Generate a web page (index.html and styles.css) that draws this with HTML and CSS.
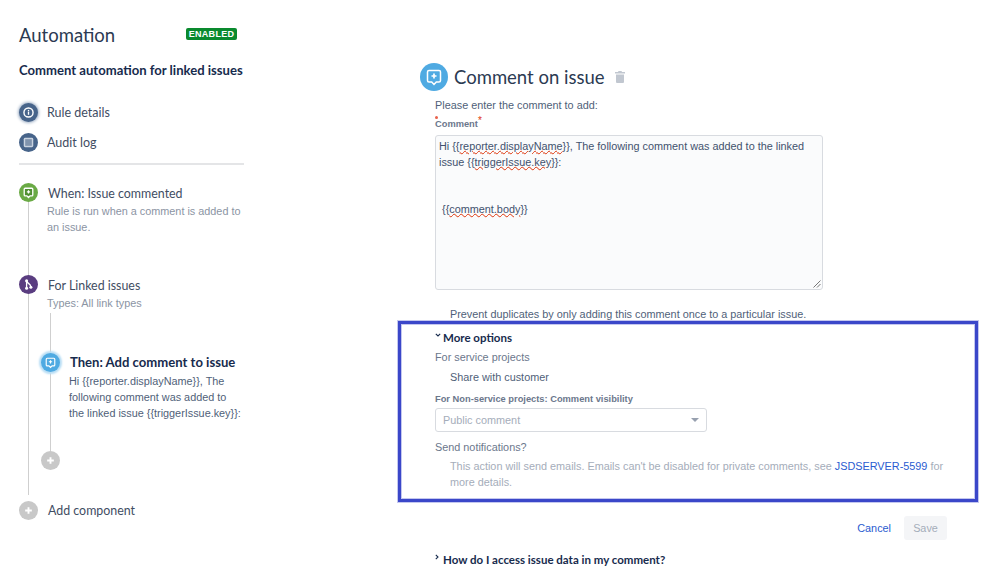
FILE: index.html
```html
<!DOCTYPE html>
<html lang="en">
<head>
<meta charset="utf-8">
<title>Automation</title>
<link rel="stylesheet" href="styles.css">
</head>
<body>
<div class="page">
  <aside class="sidebar">
    <div class="brand">
      <h1 class="brand-title">Automation</h1>
      <span class="badge">ENABLED</span>
    </div>
    <h2 class="rule-name">Comment automation for linked issues</h2>
    <nav class="nav">
      <div class="nav-row">
        <span class="dot dot-navy dot-glow"><svg viewBox="0 0 20 20" class="ico"><circle cx="10" cy="10" r="4.800" fill="none" stroke="#fff" stroke-width="1.500"/><rect x="9.300" y="9" width="1.400" height="3.400" fill="#fff"/><rect x="9.300" y="7.300" width="1.400" height="1.200" fill="#fff"/></svg></span>
        <span class="nav-label">Rule details</span>
      </div>
      <div class="nav-row">
        <span class="dot dot-navy"><svg viewBox="0 0 20 20" class="ico"><rect x="5" y="5" width="10" height="10" rx="1.500" fill="#c9d3e0"/><rect x="6.500" y="6.500" width="7" height="7" fill="#7f93ad"/></svg></span>
        <span class="nav-label">Audit log</span>
      </div>
    </nav>
    <div class="timeline">
      <span class="line-outer"></span>
      <div class="step step-when">
        <span class="dot dot-green"><svg viewBox="0 0 20 20" class="ico"><path d="M6.500 5.500h7a1 1 0 0 1 1 1v6a1 1 0 0 1-1 1h-1.800L10 15.200 8.300 13.500H6.500a1 1 0 0 1-1-1v-6a1 1 0 0 1 1-1z" fill="#4f8f30" stroke="#fff" stroke-width="1.400"/><path d="M10 7.500v3.500M8.250 9.250h3.500" stroke="#fff" stroke-width="1.300"/></svg></span>
        <div class="step-body">
          <div class="step-title">When: Issue commented</div>
          <p class="step-desc">Rule is run when a comment is added to an issue.</p>
        </div>
      </div>
      <div class="step step-for">
        <span class="dot dot-purple"><svg viewBox="0 0 20 20" class="ico"><path d="M8 6v8M8 6.500c.5 2.500 4.500 2.500 4.500 6" fill="none" stroke="#fff" stroke-width="1.400"/><circle cx="8" cy="6" r="1.600" fill="#fff"/><circle cx="8" cy="14" r="1.600" fill="#fff"/><circle cx="12.500" cy="12.800" r="1.600" fill="#fff"/></svg></span>
        <div class="step-body">
          <div class="step-title">For Linked issues</div>
          <p class="step-desc">Types: All link types</p>
        </div>
      </div>
      <div class="nested">
        <span class="line-inner"></span>
        <div class="step step-then">
          <span class="dot dot-blue dot-halo"><svg viewBox="0 0 20 20" class="ico"><path d="M6.500 5.500h7a1 1 0 0 1 1 1v6a1 1 0 0 1-1 1h-1.800L10 15.200 8.300 13.500H6.500a1 1 0 0 1-1-1v-6a1 1 0 0 1 1-1z" fill="none" stroke="#fff" stroke-width="1.200"/><path d="M10 7.500v3.500M8.250 9.250h3.500" stroke="#fff" stroke-width="1.200"/></svg></span>
          <div class="step-body">
            <div class="step-title step-title-strong">Then: Add comment to issue</div>
            <p class="step-text">Hi {{reporter.displayName}}, The following comment was added to the linked issue {{triggerIssue.key}}:</p>
          </div>
        </div>
        <div class="add-inner">
          <span class="dot dot-gray"><svg viewBox="0 0 20 20" class="ico"><path d="M10 6.500v7M6.500 10h7" stroke="#fff" stroke-width="2"/></svg></span>
        </div>
      </div>
      <div class="step step-add">
        <span class="dot dot-gray"><svg viewBox="0 0 20 20" class="ico"><path d="M10 6.500v7M6.500 10h7" stroke="#fff" stroke-width="2"/></svg></span>
        <div class="step-title">Add component</div>
      </div>
    </div>
  </aside>

  <main class="main">
    <header class="head">
      <span class="head-icon"><svg viewBox="0 0 28 28" class="ico"><path d="M9 7.500h10a1.500 1.500 0 0 1 1.500 1.500v8.500a1.500 1.500 0 0 1-1.500 1.500h-2.700L14 21.500 11.700 19H9a1.500 1.500 0 0 1-1.500-1.500V9A1.500 1.500 0 0 1 9 7.500z" fill="none" stroke="#fff" stroke-width="1.500"/><path d="M14 10.500v5M11.500 13h5" stroke="#fff" stroke-width="1.700"/></svg></span>
      <h1 class="head-title">Comment on issue</h1>
      <svg class="trash" viewBox="0 0 10 12"><path d="M3.500 0h3l.5 1H10v1.500H0V1h3zM1 3.500h8V11a1 1 0 0 1-1 1H2a1 1 0 0 1-1-1z" fill="#c1c7d0"/></svg>
    </header>
    <div class="form">
      <p class="intro">Please enter the comment to add:</p>
      <div class="label label-comment"><span class="tiny-star"></span>Comment<sup class="star">*</sup></div>
      <div class="textarea">
        <div class="ta-line">Hi {{<span class="sq">reporter.displayName</span>}}, The following comment was added to the linked</div>
        <div class="ta-line">issue {{<span class="sq">triggerIssue.key</span>}}:</div>
        <div class="ta-line">&nbsp;</div>
        <div class="ta-line ta-gap">&nbsp;{{<span class="sq">comment.body</span>}}</div>
        <svg class="grip" viewBox="0 0 9 9"><path d="M8.500 1.500l-7 7M8.500 5l-3.500 3.500" stroke="#777" stroke-width="1" fill="none"/></svg>
      </div>
      <p class="check-row check-prevent">Prevent duplicates by only adding this comment once to a particular issue.</p>

      <div class="toggle toggle-open">
        <svg class="chev" viewBox="0 0 6 4"><path d="M.8.800 3 3l2.200-2.200" fill="none" stroke="#172b4d" stroke-width="1.100"/></svg>
        <span class="toggle-label">More options</span>
      </div>
      <p class="section-label">For service projects</p>
      <p class="check-row check-share">Share with customer</p>
      <div class="label label-visibility">For Non-service projects: Comment visibility</div>
      <div class="select">
        <span>Public comment</span>
        <span class="caret"></span>
      </div>
      <p class="notify-label">Send notifications?</p>
      <p class="notify-text">This action will send emails. Emails can't be disabled for private comments, see <a class="link" href="#">JSDSERVER-5599</a> for more details.</p>
      <div class="actions">
        <a class="link cancel" href="#">Cancel</a>
        <span class="save">Save</span>
      </div>
      <div class="toggle toggle-closed">
        <svg class="chev chev-right" viewBox="0 0 4 6"><path d="M.8.800 3 3 .8 5.200" fill="none" stroke="#172b4d" stroke-width="1.100"/></svg>
        <span class="toggle-label">How do I access issue data in my comment?</span>
      </div>
    </div>
  </main>
  <div class="annotation"></div>
</div>
</body>
</html>
```
FILE: styles.css
```css
* { box-sizing: border-box; }
html, body { margin: 0; padding: 0; background: #fff; }
body { font-family: "Liberation Sans", Arial, sans-serif; color: #42526e; overflow: hidden; }
p, h1, h2 { margin: 0; font-weight: normal; }

.page { position: relative; display: flex; width: 999px; height: 577px; overflow: hidden; }

/* Sidebar */
.sidebar { width: 420px; flex: none; padding: 24px 0 0 19px; }
.brand { display: flex; align-items: center; width: 218px; height: 22px; justify-content: space-between; }
.brand-title { font: 18.500px/22px Lato, sans-serif; color: #2b3a52; }
.badge { background: #0a8a2e; color: #fff; font: bold 9px/12px "Liberation Sans", sans-serif; letter-spacing: .3px; padding: 0; border-radius: 2px; margin-top: -3px; height: 12px; width: 51px; text-align: center; white-space: nowrap; }
.rule-name { margin-top: 16px; font: bold 13.100px/17px Lato, sans-serif; color: #172b4d; white-space: nowrap; height: 18px; }

.nav { margin-top: 22px; width: 225px; padding-bottom: 11px; border-bottom: 2px solid #e4e5e7; height: 63px; }
.nav-row { display: flex; align-items: center; gap: 9px; height: 20px; margin-bottom: 10px; }
.nav-label { font: 12.500px/20px Lato, sans-serif; color: #3f4d63; padding-top: 1px; height: 20px; }

.dot { width: 19px; height: 19px; border-radius: 50%; flex: none; display: block; position: relative; z-index: 1; }
.ico { display: block; width: 100%; height: 100%; }
.dot-navy { background: #47648a; }
.dot-glow { box-shadow: 0 0 3px 1px #9fb0c6; }
.dot-green { background: #6aaa45; }
.dot-purple { background: #5a3d80; }
.dot-blue { background: #4faae2; }
.dot-halo { box-shadow: 0 0 2px 2px #b9def5; }
.dot-gray { background: #c8c8c8; }

.timeline { position: relative; padding-top: 18px; width: 225px; }
.line-outer { position: absolute; left: 9px; top: 30px; width: 1px; height: 300px; background: #cfcfcf; }
.step { display: flex; }
.step-when { height: 92px; gap: 10px; }
.step-for { height: 78px; gap: 10px; }
.step-title { font: 12.400px/22px Lato, sans-serif; height: 20px; color: #3f4d63; white-space: nowrap; }
.step-desc { margin: 1px 0 0 -1px; font: 10.850px/15.500px "Liberation Sans", sans-serif; color: #8b94a3; width: 198px; }

.nested { position: relative; padding-left: 22px; height: 147px; }
.line-inner { position: absolute; left: 31px; top: -40px; width: 1px; height: 140px; background: #cfcfcf; }
.step-then { gap: 10px; height: 98px; }
.step-title-strong { font-weight: bold; font-size: 13.100px; line-height: 19px; color: #172b4d; }
.step-text { margin: 0 0 0 -1px; font: 10.850px/16px "Liberation Sans", sans-serif; color: #505f79; width: 172px; }
.add-inner { height: 20px; }
.step-add { align-items: center; gap: 10px; height: 20px; }

/* Main */
.main { flex: none; width: 560px; padding-top: 63px; }
.head { display: flex; align-items: center; height: 28px; }
.head-icon { width: 28px; height: 28px; border-radius: 50%; background: #4faae2; flex: none; }
.head-title { margin-left: 6px; font: 18.500px/28px Lato, sans-serif; color: #2b3a52; white-space: nowrap; }
.trash { width: 10px; height: 12px; margin-left: 10px; }

.form { padding-left: 15px; width: 528px; font-size: 10.850px; }
.intro { margin-top: 8px; line-height: 13px; color: #505f79; }
.label { font-weight: bold; font-size: 9.300px; line-height: 12px; color: #6b778c; white-space: nowrap; }
.label-comment { margin-top: 6px; position: relative; }
.tiny-star { position: absolute; left: 0; top: -2px; width: 3px; height: 3px; border-radius: 50%; background: #e8604a; }
.star { color: #de350b; font-size: 10px; line-height: 0; vertical-align: 3px; font-weight: normal; }

.textarea { position: relative; margin-top: 5px; width: 388px; height: 155px; background: #fafbfc; border: 1px solid #d8dbe0; border-radius: 3px; padding: 2px 3px; line-height: 16px; color: #42526e; }
.ta-line { height: 16px; white-space: nowrap; }
.ta-gap { margin-top: 15px; }
.sq { text-decoration: underline wavy #de350b 1px; text-underline-offset: 0; }
.grip { position: absolute; right: 1px; bottom: 1px; width: 9px; height: 9px; }

.check-row { padding-left: 15px; color: #505f79; line-height: 14px; white-space: nowrap; }
.check-prevent { margin-top: 17px; }

.toggle { display: flex; align-items: flex-start; font: bold 11.500px/14px Lato, sans-serif; color: #172b4d; }
.chev { width: 6px; height: 4px; margin: 2px 2px 0 0; flex: none; }
.chev-right { width: 4px; height: 6px; margin: 1px 4px 0 0; }
.toggle-open { margin-top: 10px; height: 14px; }
.section-label { margin-top: 5px; line-height: 14px; color: #6b778c; }
.check-share { margin-top: 6px; }
.label-visibility { margin-top: 9px; }
.select { margin-top: 3px; width: 272px; height: 24px; border: 1px solid #d8dbe0; border-radius: 3px; display: flex; justify-content: space-between; align-items: center; padding: 0 7px; color: #a5adba; background: #fff; }
.caret { width: 0; height: 0; border-left: 4.500px solid transparent; border-right: 4.500px solid transparent; border-top: 4px solid #97a0af; }
.notify-label { margin-top: 8px; line-height: 14px; color: #6b778c; }
.notify-text { margin-top: 4px; padding-left: 15px; line-height: 16px; color: #a5adba; width: 528px; }
.link { color: #2a5bd0; text-decoration: none; }
.actions { display: flex; justify-content: flex-end; align-items: center; gap: 13px; margin-top: 26px; width: 512px; height: 24px; }
.save { width: 43px; height: 24px; line-height: 24px; text-align: center; background: #f4f5f7; color: #a5adba; border-radius: 3px; }
.toggle-closed { margin-top: 13px; }

/* Review annotation drawn over the form */
.annotation { position: absolute; left: 398px; top: 321px; width: 580px; height: 181px; border: 3px solid #3b47c9; box-shadow: 0 0 0 1px rgba(59, 71, 201, .3), inset 0 0 0 1px rgba(59, 71, 201, .3); pointer-events: none; }
```
